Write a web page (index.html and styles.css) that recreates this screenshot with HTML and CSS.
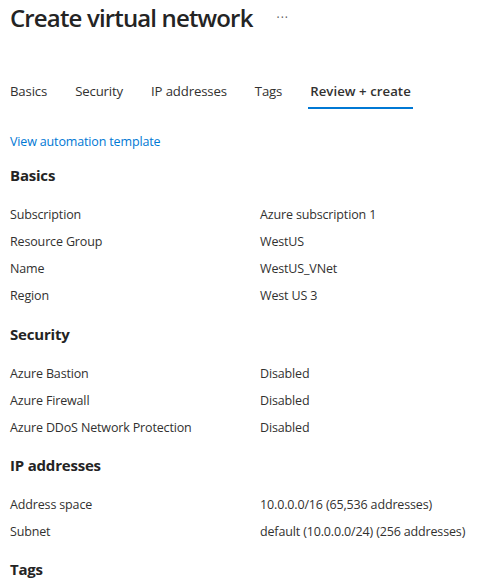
FILE: index.html
```html
<!DOCTYPE html>
<html lang="en">
<head>
<meta charset="utf-8">
<title>Create virtual network</title>
<link rel="stylesheet" href="styles.css">
</head>
<body>
<div class="page">
  <header class="title-row">
    <h1 class="title">Create virtual network</h1>
    <span class="more" aria-label="More">&middot;&middot;&middot;</span>
  </header>
  <nav class="tabs">
    <span class="tab">Basics</span>
    <span class="tab">Security</span>
    <span class="tab">IP addresses</span>
    <span class="tab">Tags</span>
    <span class="tab active">Review + create</span>
  </nav>
  <a class="link" href="#">View automation template</a>

  <section class="section">
    <h2 class="heading">Basics</h2>
    <div class="rows">
      <div class="label">Subscription</div><div class="value">Azure subscription 1</div>
      <div class="label">Resource Group</div><div class="value">WestUS</div>
      <div class="label">Name</div><div class="value">WestUS_VNet</div>
      <div class="label">Region</div><div class="value">West US 3</div>
    </div>
  </section>

  <section class="section section-gap">
    <h2 class="heading">Security</h2>
    <div class="rows">
      <div class="label">Azure Bastion</div><div class="value">Disabled</div>
      <div class="label">Azure Firewall</div><div class="value">Disabled</div>
      <div class="label">Azure DDoS Network Protection</div><div class="value">Disabled</div>
    </div>
  </section>

  <section class="section">
    <h2 class="heading">IP addresses</h2>
    <div class="rows">
      <div class="label">Address space</div><div class="value">10.0.0.0/16 (65,536 addresses)</div>
      <div class="label">Subnet</div><div class="value">default (10.0.0.0/24) (256 addresses)</div>
    </div>
  </section>

  <section class="section">
    <h2 class="heading">Tags</h2>
  </section>
</div>
</body>
</html>
```

FILE: styles.css
```css
* { box-sizing: border-box; }
html, body {
  margin: 0;
  padding: 0;
  background: #ffffff;
}
body {
  font-family: "Open Sans", "Noto Sans", "Liberation Sans", sans-serif;
  color: #323130;
  font-size: 12.5px;
  letter-spacing: -0.15px;
  overflow: hidden;
}
.page {
  padding: 2px 10px 0 10px;
}
.title-row {
  display: flex;
  align-items: center;
  height: 32px;
}
.title {
  margin: 0;
  font-size: 24px;
  line-height: 32px;
  font-weight: 600;
  color: #242424;
  letter-spacing: -0.85px;
}
.more {
  margin-left: 24px;
  font-size: 12px;
  color: #605e5c;
  letter-spacing: 1px;
  line-height: 32px;
}
.tabs {
  display: flex;
  gap: 28px;
  margin-top: 47px;
}
.tab {
  font-size: 13.2px;
  letter-spacing: -0.15px;
  line-height: 20px;
  padding: 0 2px 6px 2px;
  margin: 0 -2px;
  border-bottom: 2px solid transparent;
}
.tab:first-child { margin-left: 0; padding-left: 0; }
.tab.active {
  font-weight: 600;
  letter-spacing: 0.05px;
  border-bottom-color: #0078d4;
}
.link {
  display: block;
  margin-top: 23px;
  margin-bottom: -1px;
  font-size: 12.5px;
  line-height: 20px;
  color: #0078d4;
  text-decoration: none;
}
.section {
  padding-top: 14px;
}
.section-gap {
  padding-top: 15px;
}
.heading {
  margin: 0;
  font-size: 15px;
  line-height: 20px;
  font-weight: 700;
  color: #242424;
  letter-spacing: -0.2px;
}
.rows {
  display: grid;
  grid-template-columns: 250px 1fr;
  grid-auto-rows: 27px;
  margin-top: 16px;
  line-height: 27px;
}
.label, .value {
  white-space: nowrap;
}
```
